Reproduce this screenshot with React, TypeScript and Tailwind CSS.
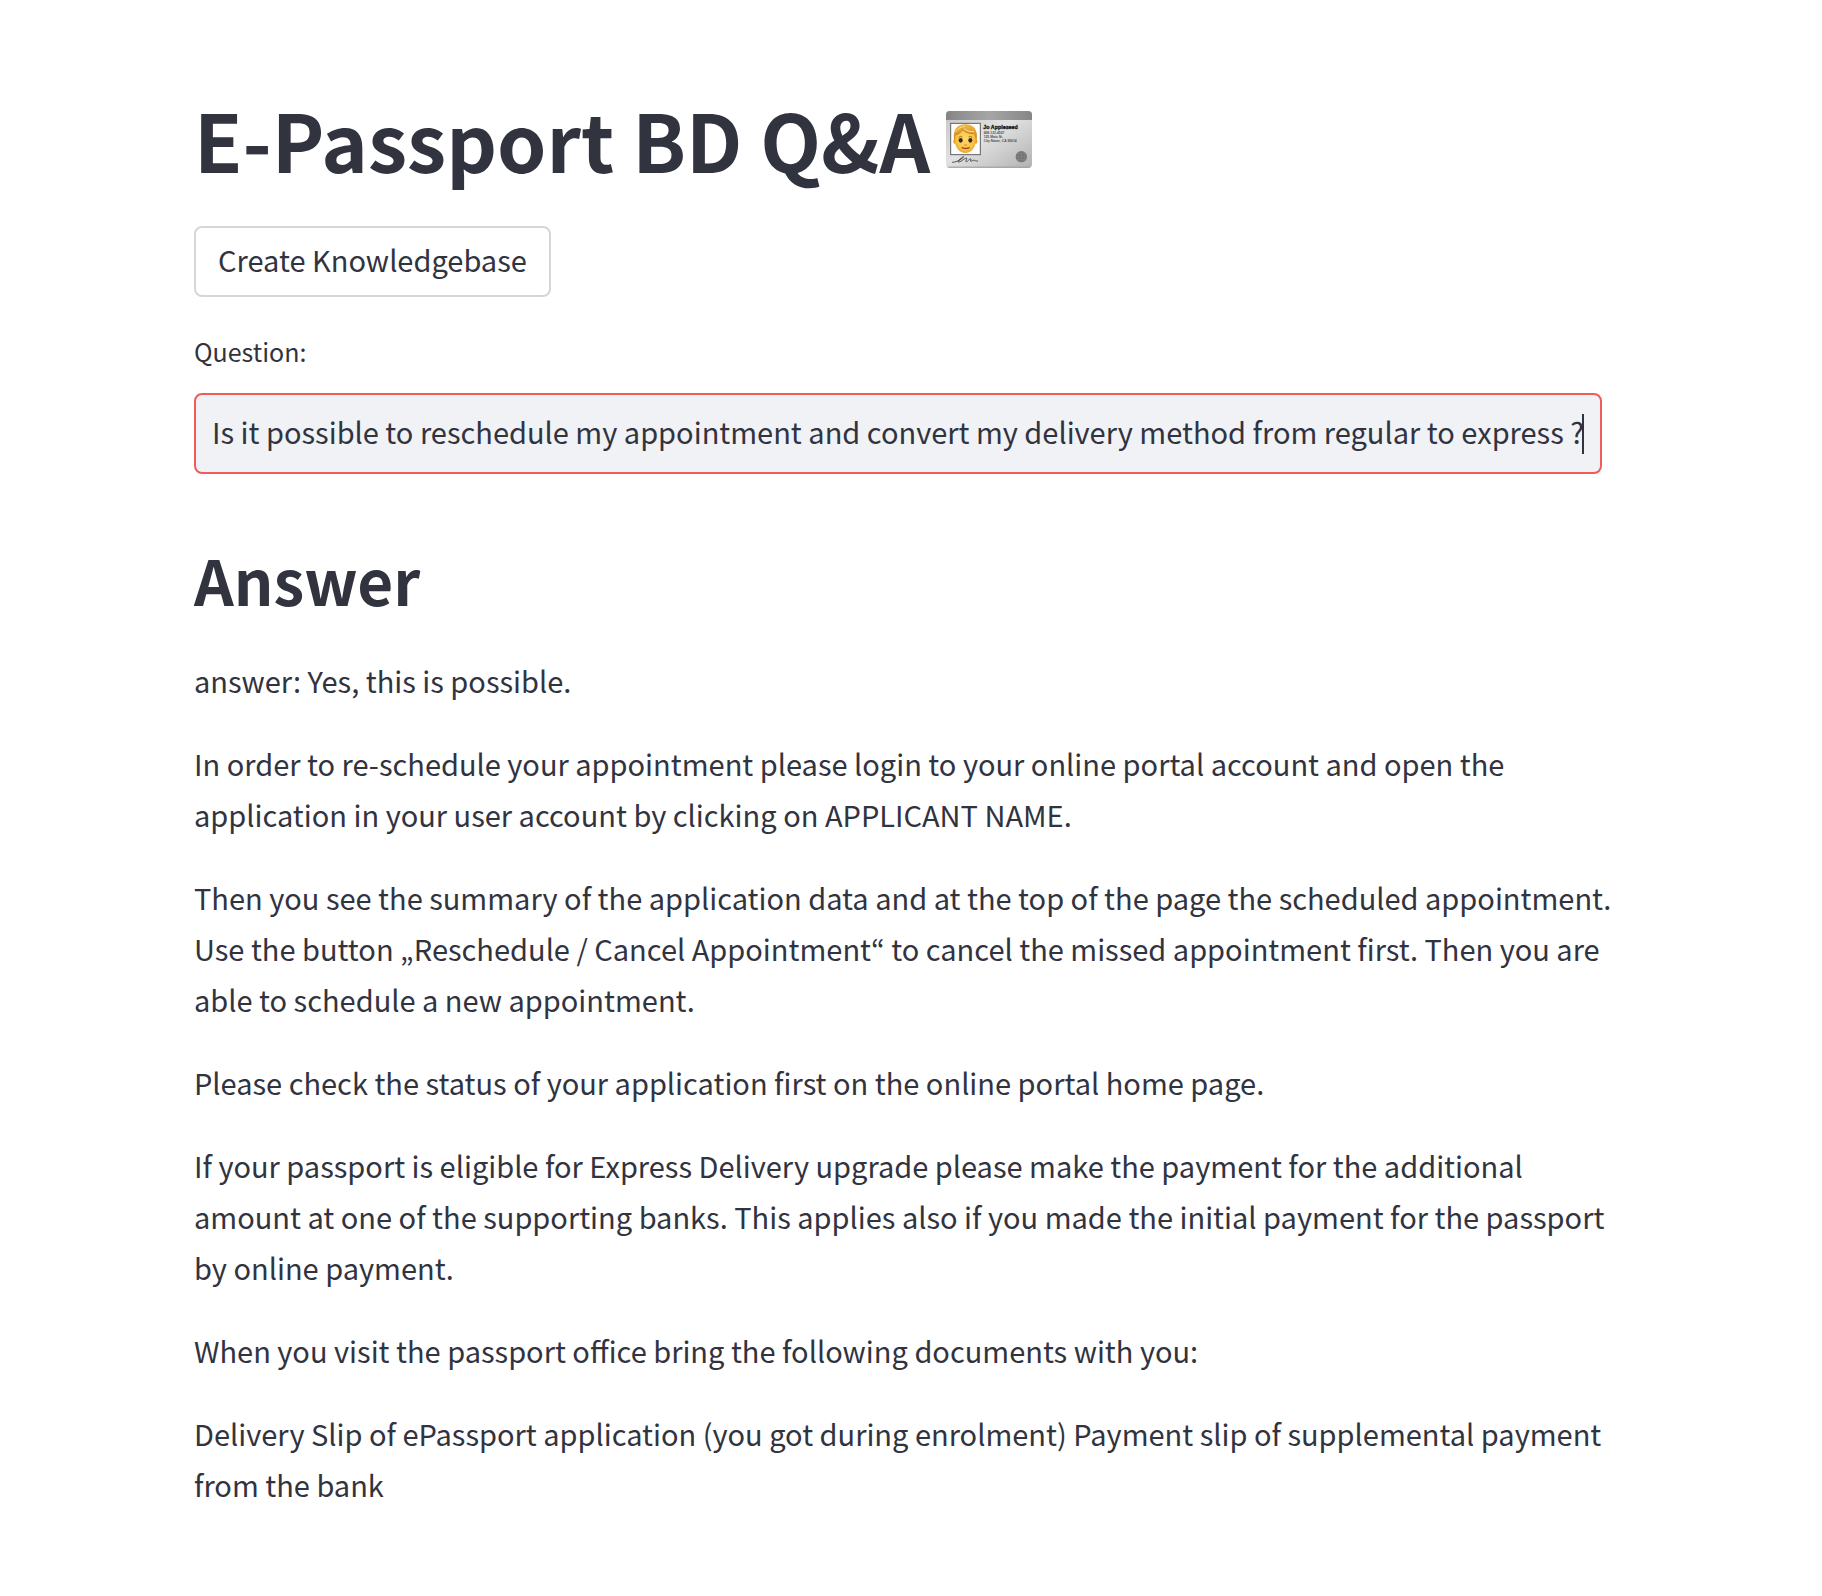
import { useState } from "react";

const paragraphs = [
  "answer: Yes, this is possible.",
  "In order to re-schedule your appointment please login to your online portal account and open the application in your user account by clicking on APPLICANT NAME.",
  "Then you see the summary of the application data and at the top of the page the scheduled appointment. Use the button „Reschedule / Cancel Appointment“ to cancel the missed appointment first. Then you are able to schedule a new appointment.",
  "Please check the status of your application first on the online portal home page.",
  "If your passport is eligible for Express Delivery upgrade please make the payment for the additional amount at one of the supporting banks. This applies also if you made the initial payment for the passport by online payment.",
  "When you visit the passport office bring the following documents with you:",
  "Delivery Slip of ePassport application (you got during enrolment) Payment slip of supplemental payment from the bank",
];

function IdCard() {
  return (
    <svg viewBox="0 0 258 171" className="h-[57px] w-[86px] shrink-0" role="img" aria-label="Identification card">
      <defs>
        <linearGradient id="body" x1="0" y1="0" x2="1" y2="1">
          <stop offset="0" stopColor="#c4c4c4" />
          <stop offset="0.45" stopColor="#e2e2e2" />
          <stop offset="1" stopColor="#b2b2b2" />
        </linearGradient>
        <linearGradient id="band" x1="0" y1="0" x2="1" y2="0">
          <stop offset="0" stopColor="#858585" />
          <stop offset="0.5" stopColor="#a6a6a6" />
          <stop offset="1" stopColor="#868686" />
        </linearGradient>
        <radialGradient id="face" cx="0.5" cy="0.45" r="0.6">
          <stop offset="0" stopColor="#ffd968" />
          <stop offset="0.7" stopColor="#f8c445" />
          <stop offset="1" stopColor="#e09a25" />
        </radialGradient>
        <linearGradient id="hair" x1="0" y1="0" x2="0" y2="1">
          <stop offset="0" stopColor="#f0b545" />
          <stop offset="1" stopColor="#d08a22" />
        </linearGradient>
        <clipPath id="card">
          <rect width="258" height="170" rx="11" />
        </clipPath>
      </defs>
      <g clipPath="url(#card)">
        <rect width="258" height="171" fill="url(#body)" />
        <rect width="258" height="27" fill="url(#band)" />
        <rect y="167" width="258" height="4" fill="#9b9b9b" />
      </g>
      <rect x="14" y="37" width="89" height="94" fill="#fdfdfd" stroke="#606060" strokeWidth="3" />
      <path d="M24 83C20 58 34 40 58 40c25 0 38 18 34 44l-4 12H28z" fill="url(#hair)" />
      <ellipse cx="26" cy="91" rx="4" ry="8" fill="#e5a02c" />
      <ellipse cx="90" cy="91" rx="4" ry="8" fill="#e5a02c" />
      <path d="M27 76c0-19 12-28 31-28s31 9 31 28v13c0 20-14 37-31 37S27 109 27 89z" fill="url(#face)" />
      <path d="M24 83c-1-27 13-42 34-42 25 0 36 17 34 43-4-3-6-12-9-16-13 1-26-4-34-12-5 10-12 13-19 15-2 4-3 9-6 12z" fill="url(#hair)" />
      <path d="M30 62c6-10 15-15 27-16M54 53c8 7 19 10 30 9" fill="none" stroke="#ffe08a" strokeWidth="3" />
      <path d="M30 71c8-2 15-6 19-15 8 8 21 13 34 12" fill="none" stroke="#b87316" strokeWidth="2" />
      <path d="M38 79q6-5 11-1M68 78q6-4 11 1" fill="none" stroke="#a66a20" strokeWidth="3" />
      <ellipse cx="44" cy="88" rx="6" ry="7" fill="#3d2818" />
      <ellipse cx="73" cy="88" rx="6" ry="7" fill="#3d2818" />
      <path d="M55 101q4 4 8 0" fill="none" stroke="#cf8125" strokeWidth="3" />
      <path d="M47 109q12 7 24 0" fill="none" stroke="#a75024" strokeWidth="4" />
      <g fill="#1b1b1b" fontFamily="Liberation Sans, sans-serif">
        <text x="112" y="53" fontSize="16" fontWeight="700" stroke="#1b1b1b" strokeWidth="1">Jo Appleseed</text>
        <g fill="#505050" fontSize="10">
          <text x="113" y="70">408-123-4567</text>
          <text x="113" y="82">125 Main St.</text>
          <text x="113" y="94">City Name, CA 95014</text>
        </g>
      </g>
      <circle cx="226" cy="137" r="17" fill="#737373" />
      <path d="M209 137h34M226 120v34M212 128h28M212 146h28M220 121q-10 16 0 32M232 121q10 16 0 32" fill="none" stroke="#8d8d8d" strokeWidth="1.5" />
      <path d="M18 154c10 0 22-5 32-13 6-5 3-6-3-1-9 7-14 14-8 13 8-1 18-13 23-12 3 1-6 11-1 11s9-9 13-9-4 8 1 8c4 0 6-4 9-4 2 0 0 3 12 3" fill="none" stroke="#3c3c3c" strokeWidth="2.5" />
    </svg>
  );
}

export default function App() {
  const [question, setQuestion] = useState(
    "Is it possible to reschedule my appointment and convert my delivery method from regular to express ?",
  );
  return (
    <main className="min-h-screen bg-white pt-[86px] pr-[220px] pb-16 pl-[194px] font-['Noto_Sans_CJK_KR',sans-serif] text-[29px] leading-[51px] text-[#31333f]">
      <h1 className="flex items-center gap-4 text-[79px] leading-[106px] font-bold">
        E-Passport BD Q&amp;A
        <IdCard />
      </h1>
      <button type="button" className="mt-[34px] flex h-[71px] items-center rounded-lg border-2 border-[#d6d6d8] px-[22px] pb-1">
        Create Knowledgebase
      </button>
      <label htmlFor="question" className="mt-8 block text-[25px] leading-[45px]">
        Question:
      </label>
      <div className="mt-[19px] flex h-[81px] items-center overflow-hidden rounded-lg border-2 border-[#f05c58] bg-[#f0f2f6] px-4">
        <input
          id="question"
          type="text"
          value={question}
          onChange={(e) => setQuestion(e.target.value)}
          className="field-sizing-content max-w-full min-w-0 bg-transparent pb-1 caret-transparent outline-none"
        />
        <span className="h-10 w-0.5 shrink-0 bg-[#31333f]" />
      </div>
      <h2 className="mt-[62px] text-[62px] leading-[86px] font-bold">Answer</h2>
      <div className="-mr-4 mt-[33px] flex flex-col gap-8">
        {paragraphs.map((text) => (
          <p key={text}>{text}</p>
        ))}
      </div>
    </main>
  );
}
